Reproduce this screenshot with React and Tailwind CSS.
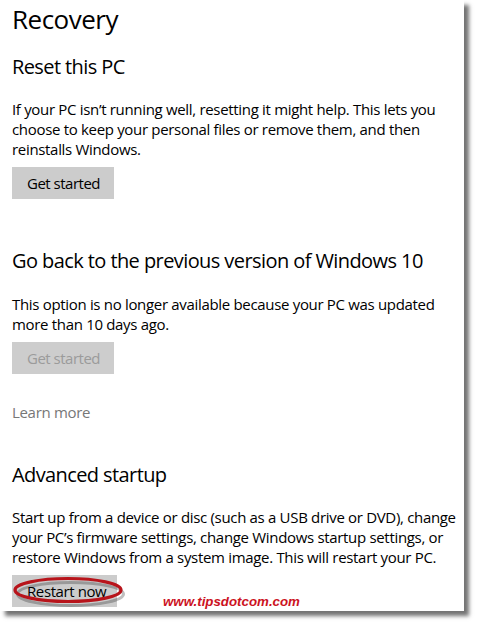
import React from "react";

const App = () => {
  return (
    <div className="w-[479px] h-[628px] bg-white relative overflow-hidden font-['Open_Sans','Liberation_Sans',sans-serif] text-black">
      <div className="relative w-[464px] h-[611px] bg-white shadow-[5px_5px_4px_rgba(0,0,0,0.55)] px-3">
        <h1 className="pt-[3px] text-[26px] leading-[32px] font-normal tracking-[-0.5px]">
          Recovery
        </h1>

        <h2 className="mt-[18px] text-[20px] leading-[28px] font-normal tracking-[-0.6px]">
          Reset this PC
        </h2>
        <p className="mt-[18px] text-[15px] leading-[20px] whitespace-nowrap tracking-[-0.32px]">
          If your PC isn’t running well, resetting it might help. This lets you
          <br />
          choose to keep your personal files or remove them, and then
          <br />
          reinstalls Windows.
        </p>
        <button className="mt-2 w-[102px] h-8 bg-[#cccccc] pl-[15px] text-left text-[15px] leading-[20px] tracking-[-0.5px]">
          Get started
        </button>

        <h2 className="mt-[48px] text-[20px] leading-[28px] font-normal whitespace-nowrap tracking-[-0.58px]">
          Go back to the previous version of Windows 10
        </h2>
        <p className="mt-[19px] text-[15px] leading-[20px] whitespace-nowrap tracking-[-0.32px]">
          This option is no longer available because your PC was updated
          <br />
          more than 10 days ago.
        </p>
        <button className="block mt-2 w-[102px] h-8 bg-[#cdcdcd] pl-[15px] text-left text-[15px] leading-[20px] text-[#9b9b9b] tracking-[-0.5px]">
          Get started
        </button>
        <div className="mt-[28px] text-[15px] leading-[20px] text-[#777777] tracking-[-0.32px]">
          Learn more
        </div>

        <h2 className="mt-[39px] text-[20px] leading-[28px] font-normal tracking-[-0.6px]">
          Advanced startup
        </h2>
        <p className="mt-[18px] text-[15px] leading-[20px] whitespace-nowrap tracking-[-0.32px]">
          Start up from a device or disc (such as a USB drive or DVD), change
          <br />
          your PC’s firmware settings, change Windows startup settings, or
          <br />
          restore Windows from a system image. This will restart your PC.
        </p>
        <div className="relative mt-2 w-[105px] h-8">
          <button className="w-full h-full bg-[#cccccc] pl-[15px] text-left text-[15px] leading-[20px] tracking-[-0.4px]">
            Restart now
          </button>
          <svg
            className="absolute left-[0px] top-[0px] overflow-visible"
            width="120"
            height="34"
            viewBox="0 0 120 34"
          >
            <ellipse cx="57" cy="17" rx="53" ry="11.5" fill="none" stroke="rgba(0,0,0,0.25)" strokeWidth="3" transform="translate(1.5 2)" />
            <ellipse cx="56" cy="15" rx="53" ry="11.5" fill="none" stroke="#b8141b" strokeWidth="3.2" />
          </svg>
        </div>

        <div className="absolute left-[163px] top-[593px] text-[13.3px] leading-[18px] font-bold italic text-[#cc1222] font-['Liberation_Sans',sans-serif]">
          www.tipsdotcom.com
        </div>
      </div>
    </div>
  );
};

export default App;
